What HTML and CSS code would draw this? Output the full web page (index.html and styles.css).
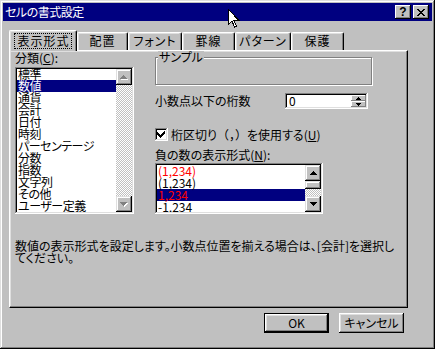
FILE: index.html
```html
<!DOCTYPE html>
<html lang="ja">
<head>
  <meta charset="UTF-8" />
  <meta name="viewport" content="width=device-width, initial-scale=1.0" />
  <title>セルの書式設定</title>
  <link rel="stylesheet" href="styles.css">
</head>
<body>
  <div class="window">
    <div class="titlebar">
      <span class="title">セルの書式設定</span>
      <div class="title-buttons">
        <span class="tbtn help">?</span>
        <span class="tbtn">
          <svg width="8" height="7" viewBox="0 0 8 7" shape-rendering="crispEdges"><path d="M0 0h2v1h1v1h2V1h1V0h2v1H7v1H6v1H5v1h1v1h1v1h1v1H6V6H5V5H3v1H2v1H0V6h1V5h1V4h1V3H2V2H1V1H0z" fill="#000"/></svg>
        </span>
      </div>
    </div>

    <div class="content">
      <div class="tabs">
        <div class="tab active t1"><span class="focus">表示形式</span></div>
        <div class="tab t2">配置</div>
        <div class="tab t3">フォント</div>
        <div class="tab t4">罫線</div>
        <div class="tab t5">パターン</div>
        <div class="tab t6">保護</div>
      </div>

      <div class="panel">
        <div class="col-left">
          <div class="label">分類(<u>C</u>):</div>
          <div class="listbox cat">
            <ul class="items">
              <li>標準</li>
              <li class="sel">数値</li>
              <li>通貨</li>
              <li>会計</li>
              <li>日付</li>
              <li>時刻</li>
              <li>パーセンテージ</li>
              <li>分数</li>
              <li>指数</li>
              <li>文字列</li>
              <li>その他</li>
              <li>ユーザー定義</li>
            </ul>
            <div class="scrollbar">
              <span class="sbtn disabled">
                <svg width="8" height="5" viewBox="0 0 8 5" shape-rendering="crispEdges"><path class="hl" d="M4 1h1v1h1v1h1v1h1v1H1V4h1V3h1V2h1z"/><path d="M3 0h1v1h1v1h1v1h1v1H0V3h1V2h1V1h1z"/></svg>
              </span>
              <span class="track"></span>
              <span class="sbtn disabled">
                <svg width="8" height="5" viewBox="0 0 8 5" shape-rendering="crispEdges"><path class="hl" d="M1 1h7v1H7v1H6v1H5v1H4V4H3V3H2V2H1z"/><path d="M0 0h7v1H6v1H5v1H4v1H3V3H2V2H1V1H0z"/></svg>
              </span>
            </div>
          </div>
        </div>

        <div class="col-right">
          <div class="group"><span class="group-label">サンプル</span></div>

          <div class="spin-row">
            <span class="spin-label">小数点以下の桁数</span>
            <div class="spin">
              <span class="spin-value">0</span>
              <div class="spin-btns">
                <span class="spin-btn"><svg width="5" height="3" viewBox="0 0 5 3" shape-rendering="crispEdges"><path d="M2 0h1v1h1v1h1v1H0V2h1V1h1z"/></svg></span>
                <span class="spin-btn"><svg width="5" height="3" viewBox="0 0 5 3" shape-rendering="crispEdges"><path d="M0 0h5v1H4v1H3v1H2V2H1V1H0z"/></svg></span>
              </div>
            </div>
          </div>

          <div class="check-row">
            <span class="checkbox">
              <svg width="9" height="9" viewBox="0 0 9 9" shape-rendering="crispEdges"><path d="M7 1h1v3H7v1H6v1H5v1H4v1H3V7H2V6H1V5H0V2h1v1h1v1h1v1h1V4h1V3h1V2h1z" fill="#000"/></svg>
            </span>
            <span>桁区切り<span class="wide">（，）</span>を使用する(<u>U</u>)</span>
          </div>

          <div class="label">負の数の表示形式(<u>N</u>):</div>
          <div class="listbox neg">
            <ul class="items">
              <li class="red">(1,234)</li>
              <li>(1,234)</li>
              <li class="sel red">1,234</li>
              <li>-1,234</li>
            </ul>
            <div class="scrollbar">
              <span class="sbtn">
                <svg width="7" height="4" viewBox="0 0 7 4" shape-rendering="crispEdges"><path d="M3 0h1v1h1v1h1v1h1v1H0V3h1V2h1V1h1z"/></svg>
              </span>
              <span class="thumb"></span>
              <span class="track"></span>
              <span class="sbtn">
                <svg width="7" height="4" viewBox="0 0 7 4" shape-rendering="crispEdges"><path d="M0 0h7v1H6v1H5v1H4v1H3V3H2V2H1V1H0z"/></svg>
              </span>
            </div>
          </div>
        </div>

        <p class="desc">数値の表示形式を設定します。小数点位置を揃える場合は、[会計]を選択し<br>てください。</p>
      </div>

      <div class="buttons">
        <button class="btn default">OK</button>
        <button class="btn">キャンセル</button>
      </div>
    </div>

    <!-- マウスカーソル -->
    <svg class="cursor" width="12" height="19" viewBox="0 0 12 19" shape-rendering="crispEdges">
      <path d="M0.5 0.5v15l3.5-3.5 2.5 6 2-1-2.5-5.5h5z" fill="#fff" stroke="#000"/>
    </svg>
  </div>
</body>
</html>
```

FILE: styles.css
```css
* {
  box-sizing: border-box;
}
body {
  margin: 0;
  background: #c0c0c0;
  font-family: "Noto Sans CJK JP", "Noto Sans", sans-serif;
  font-size: 12px;
  line-height: 12px;
  color: #000;
  font-feature-settings: "palt";
}
u {
  text-decoration-thickness: 1px;
  text-underline-offset: 1px;
}
.wide {
  font-feature-settings: normal;
}

/* ウィンドウ枠 */
.window {
  position: relative;
  width: 435px;
  height: 349px;
  padding: 3px;
  background: #c0c0c0;
  box-shadow: inset -1px -1px #000, inset 1px 1px #dfdfdf, inset -2px -2px #808080, inset 2px 2px #fff;
}
.titlebar {
  height: 18px;
  display: flex;
  align-items: center;
  justify-content: space-between;
  padding: 0 3px 0 2px;
  background: #000080;
  color: #fff;
}
.title {
  line-height: 14px;
  letter-spacing: -0.5px;
}
.title-buttons {
  display: flex;
  gap: 2px;
}
.tbtn {
  width: 16px;
  height: 14px;
  display: flex;
  align-items: center;
  justify-content: center;
  background: #c0c0c0;
  color: #000;
  box-shadow: inset -1px -1px #000, inset 1px 1px #fff, inset -2px -2px #808080;
}
.help {
  font-family: "Liberation Sans", sans-serif;
  font-weight: bold;
  font-size: 12px;
}
.cursor {
  position: absolute;
  left: 228px;
  top: 9px;
}

/* タブ */
.content {
  padding: 9px 0 0 6px;
}
.tabs {
  display: flex;
  align-items: flex-start;
  height: 20px;
}
.tab {
  height: 18px;
  margin-top: 2px;
  padding-top: 2px;
  text-align: center;
  letter-spacing: 1px;
  background: #c0c0c0;
  border-top: 1px solid #fff;
  border-left: 1px solid #fff;
  border-right: 1px solid #000;
  border-radius: 2px 2px 0 0;
  box-shadow: inset -1px 0 #808080, inset 1px 1px #dfdfdf;
}
.tab.active {
  position: relative;
  z-index: 1;
  height: 21px;
  margin-top: 0;
  padding-top: 3px;
}
.focus {
  display: inline-block;
  padding: 1px 1px 1px 2px;
  outline: 1px dotted #000;
}
.t1 { width: 68px; }
.t2 { width: 51px; }
.t3 { width: 54px; }
.t4 { width: 53px; }
.t5 { width: 56px; }
.t6 { width: 53px; }

/* パネル */
.panel {
  width: 399px;
  height: 258px;
  display: grid;
  grid-template-columns: 119px 217px;
  grid-template-rows: auto 1fr;
  column-gap: 21px;
  padding: 1px 0 0 5px;
  border: 1px solid;
  border-color: #fff #000 #000 #fff;
  box-shadow: inset -1px -1px #808080, inset 1px 1px #dfdfdf;
}
.label {
  margin-bottom: 3px;
}
.desc {
  grid-column: 1 / -1;
  margin: 26px 0 0;
  white-space: nowrap;
}

/* リストボックス */
.listbox {
  display: flex;
  padding: 2px;
  background: #fff;
  box-shadow: inset -1px -1px #fff, inset 1px 1px #808080, inset -2px -2px #dfdfdf, inset 2px 2px #000;
}
.listbox.cat {
  height: 147px;
}
.listbox.neg {
  height: 51px;
  width: 168px;
}
.items {
  flex: 1;
  margin: 0;
  padding: 0;
  list-style: none;
  overflow: hidden;
}
.items li {
  height: 12px;
  padding-left: 1px;
  white-space: nowrap;
}
.cat .items li {
  letter-spacing: -0.5px;
}
.cat .items li:first-child {
  margin-top: -1px;
}
.items li.sel {
  background: #000080;
  color: #fff;
}
.items li.red {
  color: #f00;
}
.scrollbar {
  width: 16px;
  display: flex;
  flex-direction: column;
}
.sbtn {
  height: 16px;
  flex: none;
  display: flex;
  align-items: center;
  justify-content: center;
  background: #c0c0c0;
  box-shadow: inset -1px -1px #000, inset 1px 1px #dfdfdf, inset -2px -2px #808080, inset 2px 2px #fff;
}
.sbtn svg {
  fill: #000;
}
.sbtn.disabled svg {
  fill: #808080;
}
.sbtn .hl {
  fill: none;
}
.sbtn.disabled .hl {
  fill: #fff;
}
.thumb {
  height: 8px;
  flex: none;
  background: #c0c0c0;
  box-shadow: inset -1px -1px #000, inset 1px 1px #dfdfdf, inset -2px -2px #808080, inset 2px 2px #fff;
}
.track {
  flex: 1;
  background: repeating-conic-gradient(#fff 0 25%, #c0c0c0 0 50%) 0 0 / 2px 2px;
}

/* 右側の項目 */
.group {
  height: 28px;
  margin-top: 5px;
  border: 1px solid #808080;
  box-shadow: inset 1px 1px #fff, 1px 1px #fff;
}
.group-label {
  display: block;
  width: max-content;
  margin: -7px 0 0 2px;
  padding: 0 1px;
  background: #c0c0c0;
}
.spin-row {
  display: flex;
  align-items: center;
  height: 16px;
  margin-top: 8px;
}
.spin-label {
  width: 130px;
}
.spin {
  width: 83px;
  height: 16px;
  display: flex;
  align-items: center;
  padding: 2px;
  background: #fff;
  box-shadow: inset -1px -1px #fff, inset 1px 1px #808080, inset -2px -2px #dfdfdf, inset 2px 2px #000;
}
.spin-value {
  flex: 1;
  padding-left: 2px;
}
.spin-btns {
  width: 15px;
  height: 12px;
  display: flex;
  flex-direction: column;
}
.spin-btn {
  height: 6px;
  display: flex;
  align-items: center;
  justify-content: center;
  background: #c0c0c0;
  box-shadow: inset -1px -1px #808080, inset 1px 1px #fff;
}
.check-row {
  display: flex;
  align-items: center;
  gap: 3px;
  height: 13px;
  margin-top: 19px;
  white-space: nowrap;
}
.checkbox {
  width: 13px;
  height: 13px;
  flex: none;
  display: flex;
  align-items: center;
  justify-content: center;
  background: #fff;
  box-shadow: inset -1px -1px #fff, inset 1px 1px #808080, inset -2px -2px #dfdfdf, inset 2px 2px #000;
}
.col-right .label {
  margin-top: 8px;
  margin-bottom: 2px;
}

/* ボタン */
.buttons {
  width: 399px;
  display: flex;
  justify-content: flex-end;
  gap: 10px;
  margin-top: 5px;
  padding-right: 4px;
}
.btn {
  width: 65px;
  height: 20px;
  padding: 0;
  border: none;
  background: #c0c0c0;
  font: inherit;
  color: #000;
  box-shadow: inset -1px -1px #000, inset 1px 1px #fff, inset -2px -2px #808080, inset 2px 2px #dfdfdf;
}
.btn.default {
  border: 1px solid #000;
}
```
